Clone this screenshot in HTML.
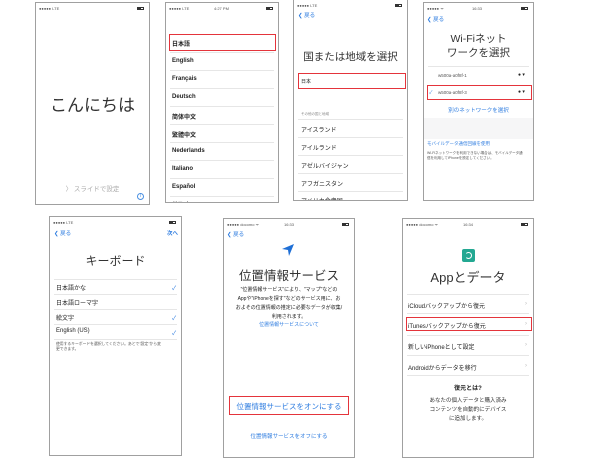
<!DOCTYPE html>
<html><head><meta charset="utf-8"><style>
*{margin:0;padding:0;box-sizing:border-box}
body{width:600px;height:450px;background:#fff;position:relative;overflow:hidden;font-family:"Liberation Sans","Noto Sans CJK JP",sans-serif;color:#222}
.ph{position:absolute;border:1px solid #a0a0a0;background:#fff;overflow:hidden}
.a{position:absolute;white-space:nowrap}
.sb{position:absolute;top:3px;left:3px;font-size:4px;color:#555}
.bat{position:absolute;top:4px;width:7px;height:3px;border:1px solid #333;background:linear-gradient(90deg,#333 60%,#fff 60%)}
.bl{color:#2f7de0}
.row{position:absolute;left:4px;right:4px;height:1px;background:#e6e6e6}
.red{position:absolute;border:1.5px solid #e4343b}
.t6{font-size:6px}
.ch{position:absolute;font-size:6px;color:#bbb}
</style></head><body>

<!-- Phone 1 -->
<div class="ph" style="left:35px;top:2px;width:115px;height:203px">
<div class="sb">●●●●● LTE</div><div class="bat" style="right:5px"></div>
<div class="a" style="left:0;right:0;top:88px;text-align:center;font-size:17px;color:#333">こんにちは</div>
<div class="a" style="left:0;right:0;top:180px;text-align:center;font-size:6.5px;color:#aaa">〉 スライドで設定</div>
<div class="a" style="left:101px;top:190px;width:7px;height:7px;border:1px solid #4a90e2;border-radius:50%;font-size:5px;color:#4a90e2;text-align:center;line-height:5px">i</div>
</div>

<!-- Phone 2 -->
<div class="ph" style="left:165px;top:2px;width:114px;height:201px">
<div class="sb">●●●●● LTE</div><div class="a" style="left:48px;top:3px;font-size:4px;color:#555">4:27 PM</div><div class="bat" style="right:5px"></div>
<div class="red" style="left:3px;top:31px;width:107px;height:17px"></div>
<div class="a t6" style="left:6px;top:36px;font-weight:bold">日本語</div>
<div class="row" style="top:49px"></div>
<div class="a t6" style="left:6px;top:55px;font-weight:bold">English</div><div class="row" style="top:67px"></div>
<div class="a t6" style="left:6px;top:73px;font-weight:bold">Français</div><div class="row" style="top:85px"></div>
<div class="a t6" style="left:6px;top:91px;font-weight:bold">Deutsch</div><div class="row" style="top:103px"></div>
<div class="a t6" style="left:6px;top:109px;font-weight:bold">简体中文</div><div class="row" style="top:121px"></div>
<div class="a t6" style="left:6px;top:127px;font-weight:bold">繁體中文</div><div class="row" style="top:139px"></div>
<div class="a t6" style="left:6px;top:145px;font-weight:bold">Nederlands</div><div class="row" style="top:157px"></div>
<div class="a t6" style="left:6px;top:163px;font-weight:bold">Italiano</div><div class="row" style="top:175px"></div>
<div class="a t6" style="left:6px;top:181px;font-weight:bold">Español</div><div class="row" style="top:193px"></div>
<div class="a t6" style="left:6px;top:197px;font-weight:bold">한국어</div>
</div>

<!-- Phone 3 -->
<div class="ph" style="left:293px;top:-1px;width:115px;height:202px">
<div class="sb">●●●●● LTE</div><div class="bat" style="right:5px"></div>
<div class="a bl" style="left:4px;top:11px;font-size:5.5px">❮ 戻る</div>
<div class="a" style="left:0;right:0;top:49px;text-align:center;font-size:10.5px;color:#333">国または地域を選択</div>
<div class="red" style="left:4px;top:73px;width:108px;height:16px"></div>
<div class="a" style="left:7px;top:78px;font-size:5px">日本</div>
<div class="a" style="left:7px;top:112px;font-size:3.5px;color:#888">その他の国と地域</div>
<div class="row" style="top:119px"></div>
<div class="a t6" style="left:7px;top:125px">アイスランド</div><div class="row" style="top:137px"></div>
<div class="a t6" style="left:7px;top:143px">アイルランド</div><div class="row" style="top:155px"></div>
<div class="a t6" style="left:7px;top:161px">アゼルバイジャン</div><div class="row" style="top:173px"></div>
<div class="a t6" style="left:7px;top:179px">アフガニスタン</div><div class="row" style="top:191px"></div>
<div class="a t6" style="left:7px;top:196px">アメリカ合衆国</div>
</div>

<!-- Phone 4 -->
<div class="ph" style="left:423px;top:2px;width:111px;height:199px">
<div class="sb">●●●●● ᯤ</div><div class="a" style="left:48px;top:3px;font-size:4px;color:#555">16:33</div><div class="bat" style="right:5px"></div>
<div class="a bl" style="left:3px;top:12px;font-size:5.5px">❮ 戻る</div>
<div class="a" style="left:0;right:0;top:29px;text-align:center;font-size:10.5px;line-height:14px;color:#333">Wi-Fiネット<br>ワークを選択</div>
<div class="row" style="top:63px"></div>
<div class="a" style="left:14px;top:70px;font-size:4.5px;color:#555">w500a-a0f8f-1</div>
<div class="a" style="left:94px;top:69px;font-size:5px">● ▾</div>
<div class="red" style="left:3px;top:82px;width:105px;height:15px"></div>
<div class="a bl" style="left:5px;top:86px;font-size:5px">✓</div>
<div class="a" style="left:14px;top:87px;font-size:4.5px;color:#555">w500a-a0f8f-3</div>
<div class="a" style="left:94px;top:86px;font-size:5px">● ▾</div>
<div class="a bl" style="left:0;right:0;top:103px;text-align:center;font-size:5.5px">別のネットワークを選択</div>
<div class="a" style="left:0;right:0;top:115px;height:21px;background:#f6f6f7"></div>
<div class="a bl" style="left:3px;top:138px;font-size:4.5px">モバイルデータ通信回線を使用</div>
<div class="a" style="left:3px;top:148px;font-size:3.5px;line-height:5px;color:#555">Wi-Fiネットワークを利用できない場合は、モバイルデータ通<br>信を利用してiPhoneを設定してください。</div>
</div>

<!-- Phone 5 -->
<div class="ph" style="left:49px;top:216px;width:133px;height:240px">
<div class="sb">●●●●● LTE</div><div class="bat" style="right:5px"></div>
<div class="a bl" style="left:4px;top:12px;font-size:5.5px">❮ 戻る</div>
<div class="a bl" style="left:117px;top:12px;font-size:5.5px;font-weight:bold">次へ</div>
<div class="a" style="left:0;right:0;top:35px;text-align:center;font-size:12px;color:#333">キーボード</div>
<div class="row" style="top:62px"></div>
<div class="a t6" style="left:6px;top:66px">日本語かな</div><div class="a bl t6" style="left:122px;top:66px">✓</div><div class="row" style="top:77px"></div>
<div class="a t6" style="left:6px;top:81px">日本語ローマ字</div><div class="row" style="top:92px"></div>
<div class="a t6" style="left:6px;top:96px">絵文字</div><div class="a bl t6" style="left:122px;top:96px">✓</div><div class="row" style="top:107px"></div>
<div class="a t6" style="left:6px;top:111px">English (US)</div><div class="a bl t6" style="left:122px;top:111px">✓</div><div class="row" style="top:122px"></div>
<div class="a" style="left:6px;top:125px;font-size:3.8px;line-height:5px;color:#555">使用するキーボードを選択してください。あとで"設定"から変<br>更できます。</div>
</div>

<!-- Phone 6 -->
<div class="ph" style="left:223px;top:218px;width:132px;height:240px">
<div class="sb">●●●●● docomo ᯤ</div><div class="a" style="left:60px;top:3px;font-size:4px;color:#555">16:33</div><div class="bat" style="right:5px"></div>
<div class="a bl" style="left:3px;top:11px;font-size:5.5px">❮ 戻る</div>
<svg class="a" style="left:57px;top:24px" width="14" height="14" viewBox="0 0 14 14"><path d="M13 1 L1 6 L7 7 L8 13 Z" fill="#1e6fd6"/></svg>
<div class="a" style="left:0;right:0;top:46px;text-align:center;font-size:12.5px;color:#333">位置情報サービス</div>
<div class="a" style="left:0;right:0;top:67px;text-align:center;font-size:5px;line-height:9px;color:#222">"位置情報サービス"により、"マップ"などの<br>Appや"iPhoneを探す"などのサービス用に、お<br>およその位置情報の推定に必要なデータが収集/<br>利用されます。</div>
<div class="a bl" style="left:0;right:0;top:102px;text-align:center;font-size:5px">位置情報サービスについて</div>
<div class="red" style="left:5px;top:177px;width:120px;height:19px"></div>
<div class="a bl" style="left:0;right:0;top:182px;text-align:center;font-size:7.5px">位置情報サービスをオンにする</div>
<div class="a bl" style="left:0;right:0;top:213px;text-align:center;font-size:5.5px">位置情報サービスをオフにする</div>
</div>

<!-- Phone 7 -->
<div class="ph" style="left:402px;top:218px;width:132px;height:240px">
<div class="sb">●●●●● docomo ᯤ</div><div class="a" style="left:60px;top:3px;font-size:4px;color:#555">16:34</div><div class="bat" style="right:5px"></div>
<div class="a" style="left:59px;top:30px;width:13px;height:13px;background:#23a892;border-radius:2px"><div style="position:absolute;left:3px;top:3px;width:7px;height:7px;border:1.3px solid #fff;border-radius:50%;border-left-color:transparent"></div></div>
<div class="a" style="left:0;right:0;top:48px;text-align:center;font-size:13px;color:#333">Appとデータ</div>
<div class="row" style="top:75px"></div>
<div class="a t6" style="left:5px;top:82px">iCloudバックアップから復元</div><div class="ch" style="left:122px;top:82px">›</div><div class="row" style="top:94px"></div>
<div class="red" style="left:3px;top:98px;width:126px;height:14px"></div>
<div class="a t6" style="left:5px;top:102px">iTunesバックアップから復元</div><div class="ch" style="left:122px;top:102px">›</div><div class="row" style="top:116px"></div>
<div class="a t6" style="left:5px;top:123px">新しいiPhoneとして設定</div><div class="ch" style="left:122px;top:123px">›</div><div class="row" style="top:136px"></div>
<div class="a t6" style="left:5px;top:144px">Androidからデータを移行</div><div class="ch" style="left:122px;top:144px">›</div><div class="row" style="top:156px"></div>
<div class="a" style="left:0;right:0;top:164px;text-align:center;font-size:6px;font-weight:bold">復元とは?</div>
<div class="a" style="left:0;right:0;top:178px;text-align:center;font-size:5.5px;line-height:9px;color:#333">あなたの個人データと購入済み<br>コンテンツを自動的にデバイス<br>に追加します。</div>
</div>

</body></html>
